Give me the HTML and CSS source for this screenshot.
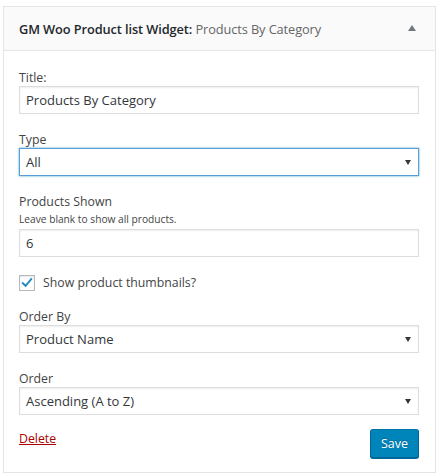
FILE: index.html
```html
<!DOCTYPE html>
<html>
<head>
<meta charset="utf-8">
<link rel="stylesheet" href="styles.css">
</head>
<body>
<div class="widget">
  <div class="widget-top">
    <h3 class="widget-title">GM Woo Product list Widget:<span class="in-title"> Products By Category</span></h3>
    <span class="toggle"></span>
  </div>
  <div class="widget-inside">
    <div class="field">
      <label class="lbl">Title:</label>
      <div class="input">Products By Category</div>
    </div>
    <div class="field">
      <label class="lbl">Type</label>
      <div class="input select focus">All<span class="caret"></span></div>
    </div>
    <div class="field">
      <label class="lbl">Products Shown</label>
      <div class="desc">Leave blank to show all products.</div>
      <div class="input">6</div>
    </div>
    <div class="check-row">
      <span class="checkbox"><svg viewBox="0 0 16 16" width="14" height="14"><path d="M3.2 8.2 L6.4 11.2 L12.8 3.6" fill="none" stroke="#1e8cbe" stroke-width="2.2" stroke-linecap="square"/></svg></span>
      <span class="check-label">Show product thumbnails?</span>
    </div>
    <div class="field">
      <label class="lbl">Order By</label>
      <div class="input select">Product Name<span class="caret"></span></div>
    </div>
    <div class="field">
      <label class="lbl">Order</label>
      <div class="input select">Ascending (A to Z)<span class="caret"></span></div>
    </div>
    <div class="actions">
      <a class="delete" href="#">Delete</a>
      <button class="save">Save</button>
    </div>
  </div>
</div>
</body>
</html>
```
FILE: styles.css
```css
* { box-sizing: border-box; }
html, body { margin: 0; padding: 0; background: #fff; }
body {
  font-family: "Open Sans", "Noto Sans", sans-serif;
  color: #444;
  padding: 6px 0 0 3px;
}
.widget {
  width: 433px;
  border: 1px solid #e5e5e5;
  background: #fff;
}
.widget-top {
  height: 44px;
  background: #fafafa;
  border-bottom: 1px solid #e5e5e5;
  display: flex;
  align-items: center;
  justify-content: space-between;
  padding: 0 19px 0 15px;
}
.widget-title {
  margin: 0;
  font-size: 12.8px;
  font-weight: 600;
  color: #23282d;
  letter-spacing: -0.1px;
}
.in-title {
  font-weight: 400;
  color: #666;
}
.toggle {
  width: 0;
  height: 0;
  border-left: 4px solid transparent;
  border-right: 4px solid transparent;
  border-bottom: 6px solid #72777c;
  margin-top: -1px;
}
.widget-inside {
  padding: 18px 16px 14px 15px;
  display: flex;
  flex-direction: column;
  gap: 17px;
}
.field {
  display: flex;
  flex-direction: column;
}
.lbl {
  font-size: 12.3px;
  line-height: 17px;
  color: #444;
}
.desc {
  font-size: 10.2px;
  line-height: 15px;
  margin: 2px 0 2px;
  color: #444;
}
.input {
  height: 28px;
  border: 1px solid #ddd;
  box-shadow: inset 0 1px 2px rgba(0,0,0,.07);
  background: #fff;
  font-size: 13px;
  line-height: 26px;
  color: #32373c;
  padding: 0 6px;
  position: relative;
}
.focus {
  border-color: #5b9dd9;
  box-shadow: 0 0 2px rgba(30,140,190,.8);
}
.caret {
  position: absolute;
  right: 7px;
  top: 11px;
  width: 0;
  height: 0;
  border-left: 3px solid transparent;
  border-right: 3px solid transparent;
  border-top: 5px solid #32373c;
}
.check-row {
  display: flex;
  align-items: center;
  height: 17px;
  gap: 8px;
}
.checkbox {
  width: 16px;
  height: 16px;
  border: 1px solid #b4b9be;
  box-shadow: inset 0 1px 2px rgba(0,0,0,.1);
  display: flex;
  align-items: center;
  justify-content: center;
  background: #fff;
}
.check-label {
  font-size: 12.3px;
  color: #444;
}
.actions {
  display: flex;
  justify-content: space-between;
  align-items: flex-start;
  margin-top: -3px;
}
.delete {
  font-size: 12.3px;
  color: #a00;
  text-decoration: underline;
  line-height: 17px;
  margin-top: 1px;
}
.save {
  width: 49px;
  height: 29px;
  background: #0085ba;
  border: 1px solid;
  border-color: #0073aa #006799 #006799;
  box-shadow: 0 1px 0 #006799;
  border-radius: 3px;
  color: #fff;
  font-family: "Open Sans", "Noto Sans", sans-serif;
  font-size: 12.5px;
  padding: 0;
  text-shadow: 0 -1px 1px #006799;
}
```
